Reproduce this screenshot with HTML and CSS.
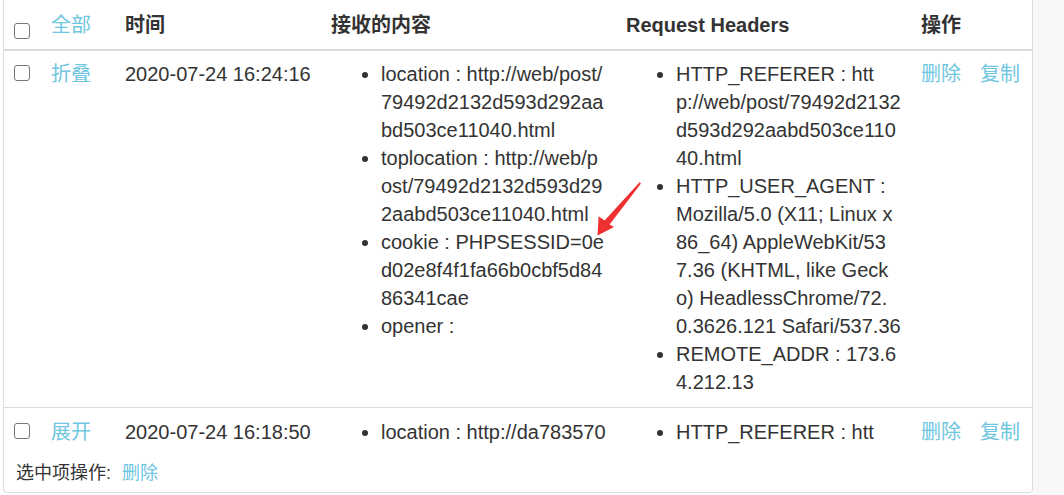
FILE: index.html
```html
<!DOCTYPE html>
<html lang="zh-CN">
<head>
<meta charset="utf-8">
<title>接收记录</title>
<link rel="stylesheet" href="styles.css">
</head>
<body>
<div class="page">
  <div class="panel">
    <div class="scroll">
      <table class="records">
        <colgroup>
          <col class="c-check"><col class="c-toggle"><col class="c-time"><col class="c-content"><col class="c-headers"><col class="c-ops">
        </colgroup>
        <thead>
          <tr>
            <th><span class="check"></span></th>
            <th><a class="link">全部</a></th>
            <th>时间</th>
            <th>接收的内容</th>
            <th>Request Headers</th>
            <th>操作</th>
          </tr>
        </thead>
        <tbody>
          <tr>
            <td><span class="check"></span></td>
            <td><a class="link">折叠</a></td>
            <td>2020-07-24 16:24:16</td>
            <td>
              <ul class="kv">
                <li>location : http://web/post/79492d2132d593d292aabd503ce11040.html</li>
                <li>toplocation : http://web/post/79492d2132d593d292aabd503ce11040.html</li>
                <li>cookie : PHPSESSID=0ed02e8f4f1fa66b0cbf5d8486341cae</li>
                <li>opener : </li>
              </ul>
            </td>
            <td>
              <ul class="kv">
                <li>HTTP_REFERER : http://web/post/79492d2132d593d292aabd503ce11040.html</li>
                <li>HTTP_USER_AGENT : Mozilla/5.0 (X11; Linux x86_64) AppleWebKit/537.36 (KHTML, like Gecko) HeadlessChrome/72.0.3626.121 Safari/537.36</li>
                <li>REMOTE_ADDR : 173.64.212.13</li>
              </ul>
            </td>
            <td class="ops"><a class="link">删除</a><a class="link op2">复制</a></td>
          </tr>
          <tr>
            <td><span class="check"></span></td>
            <td><a class="link">展开</a></td>
            <td>2020-07-24 16:18:50</td>
            <td>
              <ul class="kv">
                <li>location : http://da783570</li>
              </ul>
            </td>
            <td>
              <ul class="kv">
                <li>HTTP_REFERER : htt</li>
              </ul>
            </td>
            <td class="ops"><a class="link">删除</a><a class="link op2">复制</a></td>
          </tr>
        </tbody>
      </table>
    </div>
    <div class="footer">选中项操作:<a class="link del-selected">删除</a></div>
  </div>
  <div class="side"></div>
</div>
<svg class="arrow" width="1064" height="495" viewBox="0 0 1064 495" aria-hidden="true">
  <polygon points="639.6,182.2 641,183.6 609.6,224.4 614,227 597.5,235.5 598.6,216.2 604.6,220.6" fill="#ef3030"/>
</svg>
</body>
</html>
```
FILE: styles.css
```css
html, body {
  margin: 0;
  padding: 0;
  background: #ffffff;
}
body {
  font-family: "Liberation Sans", Arial, "Noto Sans CJK SC", sans-serif;
  font-size: 20px;
  line-height: 28px;
  color: #333333;
  position: relative;
  width: 1064px;
  height: 495px;
  overflow: hidden;
}
.page {
  display: flex;
  height: 495px;
}
.panel {
  box-sizing: border-box;
  width: 1030px;
  height: 493px;
  margin-left: 3px;
  border: 1px solid #dddddd;
  border-top: 0;
  border-radius: 0 0 4px 4px;
  display: flex;
  flex-direction: column;
  background: #ffffff;
}
.side {
  flex: 1;
  background: #f8f8f8;
}
.scroll {
  height: 450px;
  overflow: hidden;
  flex: none;
}
.records {
  width: 1028px;
  table-layout: fixed;
  border-collapse: separate;
  border-spacing: 0;
}
.c-check { width: 39px; }
.c-toggle { width: 74px; }
.c-time { width: 206px; }
.c-content { width: 295px; }
.c-headers { width: 295px; }
.c-ops { width: 119px; }

.records th {
  text-align: left;
  vertical-align: top;
  font-weight: bold;
  padding: 11px 8px 10px;
  border-bottom: 2px solid #dddddd;
  white-space: nowrap;
}
.records th .link {
  font-weight: normal;
}
.records td {
  vertical-align: top;
  padding: 9px 8px 11px;
}
.records tbody tr + tr td {
  border-top: 1px solid #dddddd;
  padding-top: 10px;
}
.check {
  display: block;
  box-sizing: border-box;
  width: 16px;
  height: 16px;
  margin-left: 2px;
  border: 1px solid #767676;
  border-radius: 3px;
  background: #ffffff;
}
.records th .check {
  margin-top: 12px;
}
.records td .check {
  margin-top: 5px;
}
.link {
  color: #6ec6e0;
  text-decoration: none;
  cursor: pointer;
}
.kv {
  margin: 0;
  padding: 0 4px 0 50px;
  list-style: disc;
  word-break: break-all;
}
.ops {
  white-space: nowrap;
}
.op2 {
  margin-left: 19px;
}
.footer {
  padding: 10px 12px 0;
  font-size: 18px;
  line-height: 26px;
  color: #333333;
  font-family: "Liberation Sans", "Noto Sans CJK SC", sans-serif;
}
.del-selected {
  margin-left: 11px;
}
.arrow {
  position: absolute;
  left: 0;
  top: 0;
  pointer-events: none;
}
```
